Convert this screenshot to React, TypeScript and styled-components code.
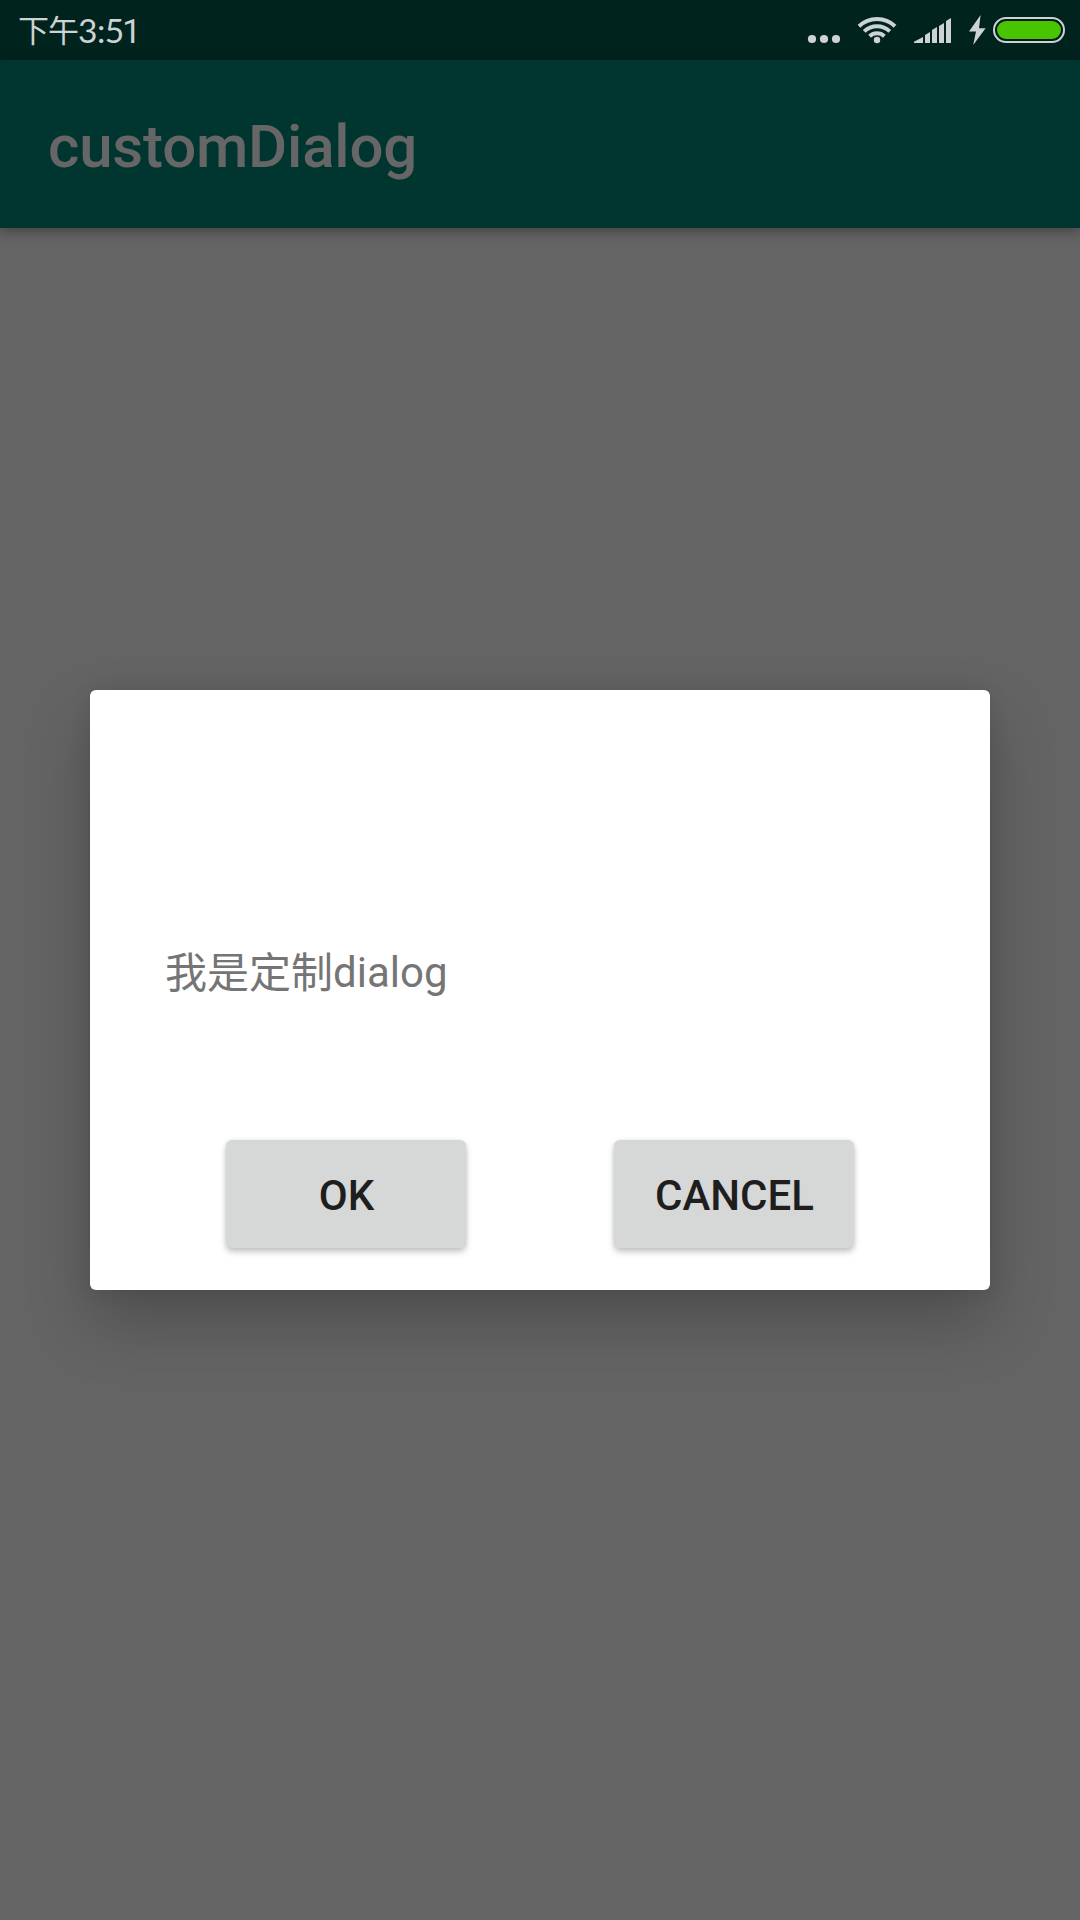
import React from "react";
import styled, { createGlobalStyle } from "styled-components";

const GlobalStyle = createGlobalStyle`
  *, *::before, *::after { box-sizing: border-box; }
  html, body { margin: 0; padding: 0; background: #646464; }
`;

const Screen = styled.div`
  position: relative;
  display: flex;
  flex-direction: column;
  width: 1080px;
  height: 1920px;
  overflow: hidden;
  background: #646464;
  font-family: Roboto, "Noto Sans CJK SC", sans-serif;
`;

const StatusBar = styled.header`
  display: flex;
  align-items: center;
  justify-content: space-between;
  height: 60px;
  padding: 0 15px 0 18px;
  background: #00231e;
  color: #cdd3d2;
`;

const Clock = styled.time`
  display: flex;
  height: 60px;
`;

const Period = styled.span`
  width: 60px;
  font: 400 31px/58px "Noto Sans CJK SC", sans-serif;
  letter-spacing: -1px;
`;

const Digits = styled.span`
  font: 400 33.5px/61px Lato, sans-serif;
  letter-spacing: -0.5px;
`;

const LastDigit = styled.span`
  margin-left: -1.5px;
  font-family: Roboto, sans-serif;
`;

const StatusIcons = styled.div`
  display: flex;
  height: 60px;
`;

const AppBar = styled.div`
  display: flex;
  align-items: center;
  height: 168px;
  padding: 0 48px;
  background: #003530;
  box-shadow: 0 3px 12px rgba(0, 0, 0, 0.36);
`;

const Title = styled.h1`
  margin: 6px 0 0;
  color: #666;
  font-size: 60px;
  font-weight: 500;
  line-height: 72px;
  letter-spacing: -0.18px;
`;

const DialogLayer = styled.div`
  position: absolute;
  inset: 60px 0 0;
  display: flex;
  align-items: center;
  justify-content: center;
`;

const Dialog = styled.section`
  display: flex;
  flex-direction: column;
  justify-content: flex-end;
  width: 900px;
  height: 600px;
  padding-bottom: 42px;
  border-radius: 6px;
  background: #fff;
  box-shadow: 0 32px 64px rgba(0, 0, 0, 0.22), 0 0 20px rgba(0, 0, 0, 0.1);
`;

const Message = styled.p`
  height: 60px;
  margin: 0 0 137px 75px;
  color: #757575;
  font-size: 42px;
  line-height: 60px;
`;

const Hanzi = styled.span`
  vertical-align: -1px;
  line-height: 1;
  font-family: "Noto Sans CJK SC", sans-serif;
`;

const Actions = styled.div`
  display: flex;
  gap: 148px;
  padding-left: 136px;
`;

const ActionButton = styled.button`
  width: 240px;
  height: 108px;
  padding: 3px 0 0 1px;
  border: 0;
  border-radius: 6px;
  background: #d6d7d7;
  color: #1e1e1e;
  font: 500 42px/50px Roboto, sans-serif;
  box-shadow: 0 4px 6px rgba(0, 0, 0, 0.22), 0 0 4px rgba(0, 0, 0, 0.08);
`;

const Indicators = () => (
  <svg width="265" height="60" viewBox="800 0 265 60" fill="#cdd3d2">
    <circle cx="812" cy="39" r="4.1" />
    <circle cx="824" cy="39" r="4.1" />
    <circle cx="836" cy="39" r="4.1" />
    <g fill="none" stroke="#cdd3d2" strokeWidth="4">
      <path d="M859 26.2A26 26 0 0 1 895 26.2" />
      <path d="M864.2 31.4A18.5 18.5 0 0 1 889.8 31.4" />
      <path d="M869.6 36.2A11 11 0 0 1 884.4 36.2" />
    </g>
    <circle cx="877" cy="40" r="3.2" />
    <path d="M914 43V41.8L923 37V43ZM925 43V35L930 32V43ZM932 43V30L937 27V43ZM939 43V26L944 23V43ZM946 43V21L951 18V43Z" />
    <path d="M980.6 15L969 31.6H976L973.2 45L985.6 28.2H979Z" />
    <rect x="994" y="18" width="70" height="24" rx="12" fill="#001b19" stroke="#cdd3d2" strokeWidth="2" />
    <rect x="997" y="21" width="64" height="18" rx="9" fill="#48c400" />
  </svg>
);

export default function App() {
  return (
    <>
      <GlobalStyle />
      <Screen>
        <StatusBar>
          <Clock>
            <Period>下午</Period>
            <Digits>
              3:5<LastDigit>1</LastDigit>
            </Digits>
          </Clock>
          <StatusIcons>
            <Indicators />
          </StatusIcons>
        </StatusBar>
        <AppBar>
          <Title>customDialog</Title>
        </AppBar>
        <DialogLayer>
          <Dialog role="dialog">
            <Message>
              <Hanzi>我是定制</Hanzi>dialog
            </Message>
            <Actions>
              <ActionButton>OK</ActionButton>
              <ActionButton>CANCEL</ActionButton>
            </Actions>
          </Dialog>
        </DialogLayer>
      </Screen>
    </>
  );
}
